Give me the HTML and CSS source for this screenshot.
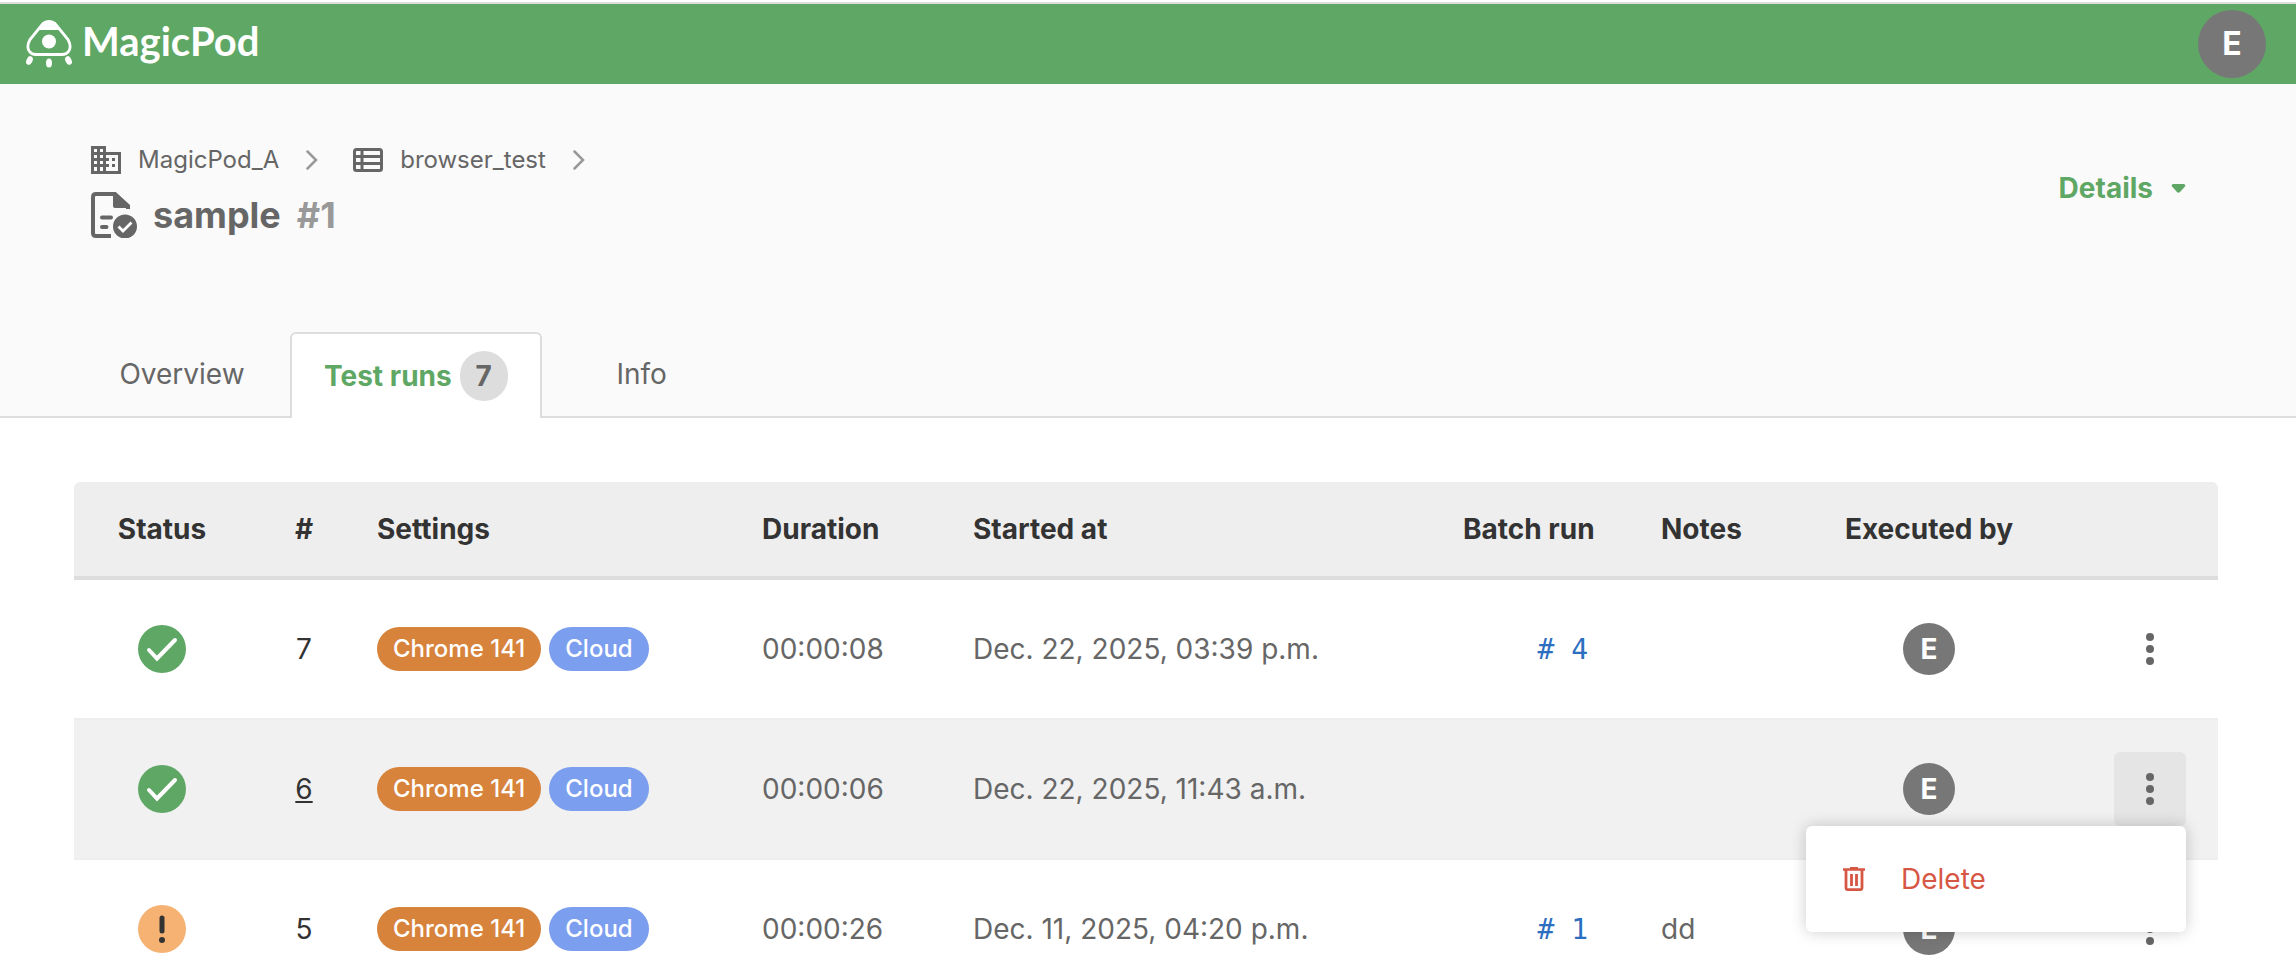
FILE: index.html
```html
<!DOCTYPE html>
<html lang="en">
<head>
  <meta charset="UTF-8" />
  <meta name="viewport" content="width=device-width, initial-scale=1">
  <title>sample #1 - MagicPod</title>
  <link rel="stylesheet" href="styles.css">
</head>
<body>
  <header class="navbar">
    <a class="logo" href="#">
      <svg class="logo-icon" viewBox="0 0 46 48" aria-hidden="true">
        <path d="M17 3.500Q23 -.5 29 3.500L42 19.500Q46 27 42.500 31.500Q40.500 34.500 36 34.500H10Q5.500 34.500 3.500 31.500Q0 27 4 19.500Z" fill="none" stroke="#fff" stroke-width="2.800"/>
        <path d="M13 10L17 4Q23 -2.500 29 4L34 10Z" fill="#fff"/>
        <circle cx="23" cy="21.500" r="7" fill="#fff"/>
        <ellipse cx="3.500" cy="40.500" rx="3" ry="4.500" transform="rotate(25 3.500 40.500)" fill="#fff"/>
        <ellipse cx="23" cy="43" rx="3" ry="4.500" fill="#fff"/>
        <ellipse cx="42.500" cy="40.500" rx="3" ry="4.500" transform="rotate(-25 42.500 40.500)" fill="#fff"/>
      </svg>
      <span class="logo-text">MagicPod</span>
    </a>
    <button type="button" class="avatar avatar-large" aria-label="Account">E</button>
  </header>

  <div class="page-head">
    <div class="title-row">
      <div class="title-block">
        <nav class="breadcrumb" aria-label="Breadcrumb">
          <svg class="crumb-icon" viewBox="0 0 30 28" aria-hidden="true">
            <path fill="#666" fill-rule="evenodd" d="M0 0H15V6H30V28H0ZM3 3V6H6V3ZM9 3V6H12V3ZM3 9V12H6V9ZM9 9V12H12V9ZM3 15V18H6V15ZM9 15V18H12V15ZM3 21V25H6V21ZM9 21V25H12V21ZM15 9V12H18V15H15V18H18V21H15V25H27V9ZM21 12H24V15H21ZM21 18H24V21H21Z"/>
          </svg>
          <a class="crumb" href="#">MagicPod_A</a>
          <svg class="chevron" viewBox="0 0 12 20" aria-hidden="true"><path d="M1.500 1.500L10 10L1.500 18.500" fill="none" stroke="#999" stroke-width="2.500" stroke-linecap="round"/></svg>
          <svg class="crumb-icon" viewBox="0 0 30 28" aria-hidden="true">
            <rect x="1.500" y="3.500" width="27" height="21" rx="2" fill="none" stroke="#666" stroke-width="3"/>
            <path d="M1 10.500H29M1 17.500H29M9 3V25" stroke="#666" stroke-width="3"/>
          </svg>
          <a class="crumb" href="#">browser_test</a>
          <svg class="chevron" viewBox="0 0 12 20" aria-hidden="true"><path d="M1.500 1.500L10 10L1.500 18.500" fill="none" stroke="#999" stroke-width="2.500" stroke-linecap="round"/></svg>
        </nav>
        <h1 class="title">
          <svg class="title-icon" viewBox="0 0 46 46" aria-hidden="true">
            <path d="M20 44H5Q2 44 2 41V5Q2 2 5 2H24L37 14V17" fill="none" stroke="#666" stroke-width="4"/>
            <path d="M22 2H25L38 14V16H24Q22 16 22 14Z" fill="#666"/>
            <path d="M11 25.500H20M11 35H15.500" stroke="#666" stroke-width="4" stroke-linecap="round"/>
            <circle cx="34" cy="34.500" r="14" fill="#fafafa"/>
            <circle cx="34" cy="34.500" r="12" fill="#666"/>
            <path d="M27.500 34.500L32 39L40.500 30.500" fill="none" stroke="#fff" stroke-width="2.800"/>
          </svg>
          <span>sample</span>
          <span class="title-number">#1</span>
        </h1>
      </div>
      <button type="button" class="details-btn">
        Details
        <svg class="caret" viewBox="0 0 14 9" aria-hidden="true"><path d="M1.500 0H12.500Q15 1 13 3L8.500 8Q7 9.500 5.500 8L1 3Q-1 1 1.500 0Z" fill="#5fa765"/></svg>
      </button>
    </div>

    <nav class="tabs">
      <a class="tab tab-first" href="#">Overview</a>
      <a class="tab tab-active" href="#" aria-current="page">Test runs<span class="count">7</span></a>
      <a class="tab" href="#">Info</a>
    </nav>
  </div>

  <main class="content">
    <table class="runs">
      <colgroup>
        <col class="col-status">
        <col class="col-number">
        <col class="col-settings">
        <col class="col-duration">
        <col>
        <col class="col-batch">
        <col class="col-notes">
        <col class="col-user">
        <col class="col-actions">
      </colgroup>
      <thead>
        <tr>
          <th class="center">Status</th>
          <th class="center">#</th>
          <th>Settings</th>
          <th>Duration</th>
          <th>Started at</th>
          <th>Batch run</th>
          <th>Notes</th>
          <th class="center">Executed by</th>
          <th></th>
        </tr>
      </thead>
      <tbody>
        <tr>
          <td class="center">
            <svg class="status" viewBox="0 0 48 48" role="img" aria-label="Succeeded"><circle cx="24" cy="24" r="24" fill="#5fa765"/><path d="M11 25L19 33.500L37 15" fill="none" stroke="#fff" stroke-width="4" stroke-linecap="round"/></svg>
          </td>
          <td class="center"><a class="run-link" href="#">7</a></td>
          <td><div class="pills"><span class="pill pill-browser">Chrome 141</span><span class="pill pill-cloud">Cloud</span></div></td>
          <td>00:00:08</td>
          <td>Dec. 22, 2025, 03:39 p.m.</td>
          <td class="batch"><a class="batch-link" href="#"># 4</a></td>
          <td></td>
          <td class="center"><span class="avatar">E</span></td>
          <td class="actions">
            <div class="dropdown">
              <button type="button" class="kebab" aria-label="Actions for run 7"><svg class="dots" viewBox="0 0 8 32" aria-hidden="true"><circle cx="4" cy="4" r="4"/><circle cx="4" cy="16" r="4"/><circle cx="4" cy="28" r="4"/></svg></button>
            </div>
          </td>
        </tr>
        <tr class="row-hover">
          <td class="center">
            <svg class="status" viewBox="0 0 48 48" role="img" aria-label="Succeeded"><circle cx="24" cy="24" r="24" fill="#5fa765"/><path d="M11 25L19 33.500L37 15" fill="none" stroke="#fff" stroke-width="4" stroke-linecap="round"/></svg>
          </td>
          <td class="center"><a class="run-link" href="#">6</a></td>
          <td><div class="pills"><span class="pill pill-browser">Chrome 141</span><span class="pill pill-cloud">Cloud</span></div></td>
          <td>00:00:06</td>
          <td>Dec. 22, 2025, 11:43 a.m.</td>
          <td></td>
          <td></td>
          <td class="center"><span class="avatar">E</span></td>
          <td class="actions">
            <div class="dropdown">
              <button type="button" class="kebab kebab-open" aria-label="Actions for run 6" aria-expanded="true"><svg class="dots" viewBox="0 0 8 32" aria-hidden="true"><circle cx="4" cy="4" r="4"/><circle cx="4" cy="16" r="4"/><circle cx="4" cy="28" r="4"/></svg></button>
              <div class="menu">
                <button type="button" class="menu-item">
                  <svg class="trash" viewBox="0 0 22 24" aria-hidden="true">
                    <path d="M0 2.500H22M7 1H15" fill="none" stroke="#d75745" stroke-width="2.500"/>
                    <path d="M3 3V21Q3 22.700 5 22.700H17Q19 22.700 19 21V3M8.500 7V19M13.500 7V19" fill="none" stroke="#d75745" stroke-width="2.800"/>
                  </svg>
                  Delete
                </button>
              </div>
            </div>
          </td>
        </tr>
        <tr>
          <td class="center">
            <svg class="status" viewBox="0 0 48 48" role="img" aria-label="Unresolved"><circle cx="24" cy="24" r="24" fill="#f5b273"/><path d="M24 13V26" stroke="#333" stroke-width="5" stroke-linecap="round"/><circle cx="24" cy="35" r="3" fill="#333"/></svg>
          </td>
          <td class="center"><a class="run-link" href="#">5</a></td>
          <td><div class="pills"><span class="pill pill-browser">Chrome 141</span><span class="pill pill-cloud">Cloud</span></div></td>
          <td>00:00:26</td>
          <td>Dec. 11, 2025, 04:20 p.m.</td>
          <td class="batch"><a class="batch-link" href="#"># 1</a></td>
          <td>dd</td>
          <td class="center"><span class="avatar">E</span></td>
          <td class="actions">
            <div class="dropdown">
              <button type="button" class="kebab" aria-label="Actions for run 5"><svg class="dots" viewBox="0 0 8 32" aria-hidden="true"><circle cx="4" cy="4" r="4"/><circle cx="4" cy="16" r="4"/><circle cx="4" cy="28" r="4"/></svg></button>
            </div>
          </td>
        </tr>
      </tbody>
    </table>
  </main>
</body>
</html>
```
FILE: styles.css
```css
* {
  box-sizing: border-box;
}
body {
  margin: 0;
  padding-top: 2px;
  background: #fff;
  color: #666;
  font-family: Inter, "Liberation Sans", sans-serif;
  font-size: 28px;
  line-height: 36px;
}
a {
  color: inherit;
  text-decoration: none;
}
button {
  border: none;
  padding: 0;
  background: none;
  font: inherit;
  cursor: pointer;
}
svg {
  display: block;
  flex: none;
}

/* Top bar */
.navbar {
  display: flex;
  align-items: center;
  justify-content: space-between;
  height: 82px;
  padding: 0 30px 0 26px;
  border-top: 2px solid #ddd;
  background: #5fa765;
}
.logo {
  display: flex;
  align-items: flex-start;
  gap: 10px;
  color: #fff;
}
.logo-icon {
  width: 46px;
  height: 48px;
}
.logo-text {
  font-family: Lato, sans-serif;
  font-size: 40px;
  font-weight: 700;
  line-height: 42px;
}
.avatar {
  display: flex;
  align-items: center;
  justify-content: center;
  width: 52px;
  height: 52px;
  margin: 0 auto;
  border-radius: 50%;
  background: #777;
  color: #fff;
  font-weight: 700;
}
.avatar-large {
  width: 68px;
  height: 68px;
  margin: 0;
  font-size: 32px;
}

/* Page heading */
.page-head {
  border-bottom: 2px solid #ddd;
  background: #fafafa;
}
.title-row {
  display: flex;
  align-items: center;
  justify-content: space-between;
  height: 248px;
  padding: 0 110px 40px 91px;
}
.title-block {
  padding-top: 4px;
}
.breadcrumb {
  display: flex;
  align-items: center;
  font-size: 24px;
}
.crumb-icon {
  width: 30px;
  height: 28px;
  margin-right: 17px;
}
.chevron {
  width: 12px;
  height: 20px;
  margin: 0 35px 0 27px;
}
.title {
  display: flex;
  align-items: center;
  gap: 16px;
  margin: 14px 0 0;
  font-size: 36px;
  line-height: 46px;
}
.title-icon {
  width: 46px;
  height: 46px;
}
.title-number {
  color: #999;
}
.details-btn {
  display: flex;
  align-items: center;
  gap: 18px;
  color: #5fa765;
  font-weight: 700;
}
.caret {
  width: 15px;
  height: 9px;
}

/* Tabs */
.tabs {
  display: flex;
  padding-left: 74px;
  margin-bottom: -2px;
}
.tab {
  display: flex;
  align-items: center;
  justify-content: center;
  min-width: 200px;
  height: 86px;
  padding: 0 34px 2px;
}
.tab-first {
  min-width: 216px;
}
.tab-active {
  border: 2px solid #ddd;
  border-bottom: none;
  border-radius: 6px 6px 0 0;
  padding: 0 32px;
  background: #fff;
  color: #5fa765;
  font-weight: 700;
}
.count {
  min-width: 48px;
  margin-left: 8px;
  padding: 7px 0;
  border-radius: 25px;
  background: #ddd;
  color: #666;
  text-align: center;
}

/* Runs table */
.content {
  padding: 64px 78px 40px 74px;
}
.runs {
  width: 100%;
  table-layout: fixed;
  border-spacing: 0;
}
.col-status { width: 176px; }
.col-number { width: 108px; }
.col-settings { width: 385px; }
.col-duration { width: 211px; }
.col-batch { width: 198px; }
.col-notes { width: 183px; }
.col-user { width: 208px; }
.col-actions { width: 185px; }
.runs th,
.runs td {
  padding: 0 20px 0 19px;
  text-align: left;
  vertical-align: middle;
  white-space: nowrap;
}
.runs th {
  height: 98px;
  border-bottom: 4px solid #ddd;
  background: #eee;
  color: #333;
}
.runs th:first-child {
  border-top-left-radius: 6px;
}
.runs th:last-child {
  border-top-right-radius: 6px;
}
.runs td {
  height: 140px;
  border-bottom: 2px solid #eee;
}
.runs .center {
  padding: 0;
  text-align: center;
}
.row-hover td {
  background: #f1f1f1;
}
.row-hover .run-link {
  text-decoration: underline;
}
.status {
  width: 48px;
  height: 48px;
  margin: 0 auto;
}
.run-link {
  color: #333;
}
.pills {
  display: flex;
  gap: 8px;
}
.pill {
  padding: 4px 16px;
  border-radius: 22px;
  color: #fff;
  font-size: 24px;
  font-weight: 500;
}
.pill-browser {
  background: #d7833b;
}
.pill-cloud {
  background: #7b9eef;
}
.runs .batch {
  padding-right: 54px;
  text-align: right;
}
.batch-link {
  color: #2c6fc0;
  font-family: "DejaVu Sans Mono", monospace;
}
.runs .actions {
  padding: 0 32px 0 0;
}

/* Row menu */
.dropdown {
  position: relative;
  width: 72px;
  margin-left: auto;
}
.kebab {
  display: flex;
  align-items: center;
  justify-content: center;
  width: 72px;
  height: 74px;
  border-radius: 6px;
}
.kebab-open {
  background: #e5e5e5;
}
.dots {
  width: 8px;
  height: 32px;
  fill: #666;
}
.menu {
  position: absolute;
  top: 100%;
  right: 0;
  z-index: 10;
  width: 380px;
  padding: 16px 0;
  border-radius: 6px;
  background: #fff;
  box-shadow: 0 0 16px rgba(0, 0, 0, 0.2);
}
.menu-item {
  display: flex;
  align-items: center;
  gap: 36px;
  width: 100%;
  height: 74px;
  padding: 0 37px;
  color: #d75745;
}
.trash {
  width: 22px;
  height: 24px;
}
```
